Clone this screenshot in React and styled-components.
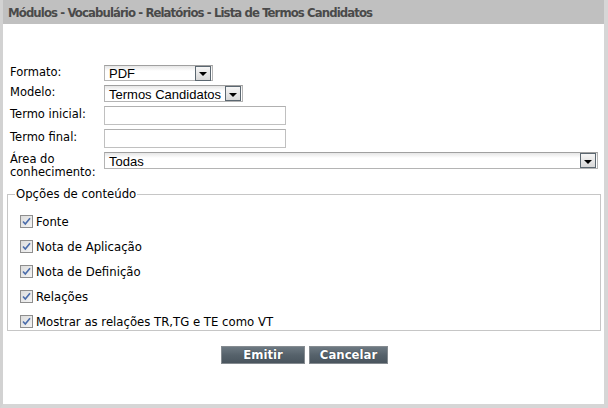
import React from "react";
import styled, { createGlobalStyle } from "styled-components";

const Global = createGlobalStyle`
  html, body { margin: 0; padding: 0; background: #fff; }
  * { box-sizing: border-box; }
`;

const Window = styled.div`
  width: 608px;
  height: 408px;
  border-left: 3px solid #d2d2d2;
  border-right: 4px solid #d6d6d6;
  border-bottom: 4px solid #d6d6d6;
  background: #fff;
  display: flex;
  flex-direction: column;
  font-family: "DejaVu Sans", Verdana, sans-serif;
  color: #000;
`;

const Header = styled.div`
  height: 24px;
  background: #c0c0c0;
  padding-left: 5px;
  display: flex;
  align-items: center;
  font-family: "DejaVu Sans Condensed", "DejaVu Sans", sans-serif;
  font-weight: bold;
  font-size: 13px;
  color: #4a4a4a;
  letter-spacing: -0.9px;
`;

const Body = styled.div`
  padding: 41px 4px 0 4px;
  display: flex;
  flex-direction: column;
`;

const Form = styled.div`
  display: grid;
  grid-template-columns: 94px 1fr;
  row-gap: 4px;
  align-items: start;
  padding-left: 3px;
`;

const Label = styled.div`
  font-size: 11.5px;
  line-height: 13px;
  padding-top: ${(p) => p.$pt}px;
  white-space: nowrap;
`;

const SelectBox = styled.div`
  width: ${(p) => p.$w}px;
  height: ${(p) => p.$h}px;
  border: 1px solid #b4b4b4;
  border-top-color: #a0a0a0;
  background: linear-gradient(#e6e6e6, #ffffff 5px);
  display: flex;
  align-items: center;
  padding-left: 4px;
  font-family: "Liberation Sans", Arial, sans-serif;
  font-size: 13px;
`;

const SelectText = styled.span`
  flex: 1;
  line-height: 1;
  padding-top: 1px;
`;

const Arrow = styled.span`
  width: 16px;
  height: 15px;
  margin-right: 1px;
  border: 1px solid #5b6770;
  background: linear-gradient(#f6f6f6, #d8d8d8);
  display: flex;
  align-items: center;
  justify-content: center;
  &::after {
    content: "";
    margin-top: 2px;
    border-left: 4px solid transparent;
    border-right: 4px solid transparent;
    border-top: 4px solid #000;
  }
`;

const TextInput = styled.div`
  width: 182px;
  height: 19px;
  border: 1px solid #c0c0c0;
  border-top-color: #b0b0b0;
  background: #fff;
`;

const Fieldset = styled.fieldset`
  margin: 8px 0 0 0;
  width: 594px;
  height: 144px;
  border: 1px solid #c6c6c6;
  padding: 8px 0 0 12px;
  min-width: 0;
`;

const Legend = styled.legend`
  font-size: 11.7px;
  padding: 0 1px;
  margin-left: -5px;
`;

const CheckRow = styled.label`
  display: flex;
  align-items: center;
  gap: 3px;
  height: 25px;
  font-size: 11.7px;
`;

const Box = styled.span`
  width: 13px;
  height: 13px;
  border: 1px solid #8e8e8e;
  background: linear-gradient(135deg, #dcdcdc, #f4f4f4);
  display: flex;
  align-items: center;
  justify-content: center;
`;

const Buttons = styled.div`
  display: flex;
  justify-content: center;
  gap: 4px;
  margin-top: 15px;
  padding-left: 2px;
`;

const Button = styled.button`
  width: ${(p) => p.$w}px;
  height: 18px;
  padding: 0;
  border: 1px solid #858b90;
  background: linear-gradient(#6d7982, #56626b 50%, #4a555e);
  color: #fff;
  font-family: "DejaVu Sans Condensed", "DejaVu Sans", sans-serif;
  font-weight: bold;
  font-size: 13px;
  line-height: 16px;
  text-shadow: 0 0 1px #1e2a33;
`;

function Select({ w, h, children }) {
  return (
    <SelectBox $w={w} $h={h}>
      <SelectText>{children}</SelectText>
      <Arrow />
    </SelectBox>
  );
}

function Check({ children }) {
  return (
    <CheckRow>
      <Box>
        <svg width="9" height="9" viewBox="0 0 9 9">
          <path d="M1 4.5 L3.3 7 L8 1.2" fill="none" stroke="#4a6cab" strokeWidth="1.6" />
        </svg>
      </Box>
      {children}
    </CheckRow>
  );
}

export default function App() {
  return (
    <>
      <Global />
      <Window>
        <Header>Módulos - Vocabulário - Relatórios - Lista de Termos Candidatos</Header>
        <Body>
          <Form>
            <Label $pt={1}>Formato:</Label>
            <Select w={109} h={16}>PDF</Select>
            <Label $pt={1}>Modelo:</Label>
            <Select w={139} h={17}>Termos Candidatos</Select>
            <Label $pt={2}>Termo inicial:</Label>
            <TextInput />
            <Label $pt={2}>Termo final:</Label>
            <TextInput />
            <Label $pt={1}>Área do<br />conhecimento:</Label>
            <Select w={494} h={17}>Todas</Select>
          </Form>
          <Fieldset>
            <Legend>Opções de conteúdo</Legend>
            <Check>Fonte</Check>
            <Check>Nota de Aplicação</Check>
            <Check>Nota de Definição</Check>
            <Check>Relações</Check>
            <Check>Mostrar as relações TR,TG e TE como VT</Check>
          </Fieldset>
          <Buttons>
            <Button $w={84}>Emitir</Button>
            <Button $w={79}>Cancelar</Button>
          </Buttons>
        </Body>
      </Window>
    </>
  );
}
